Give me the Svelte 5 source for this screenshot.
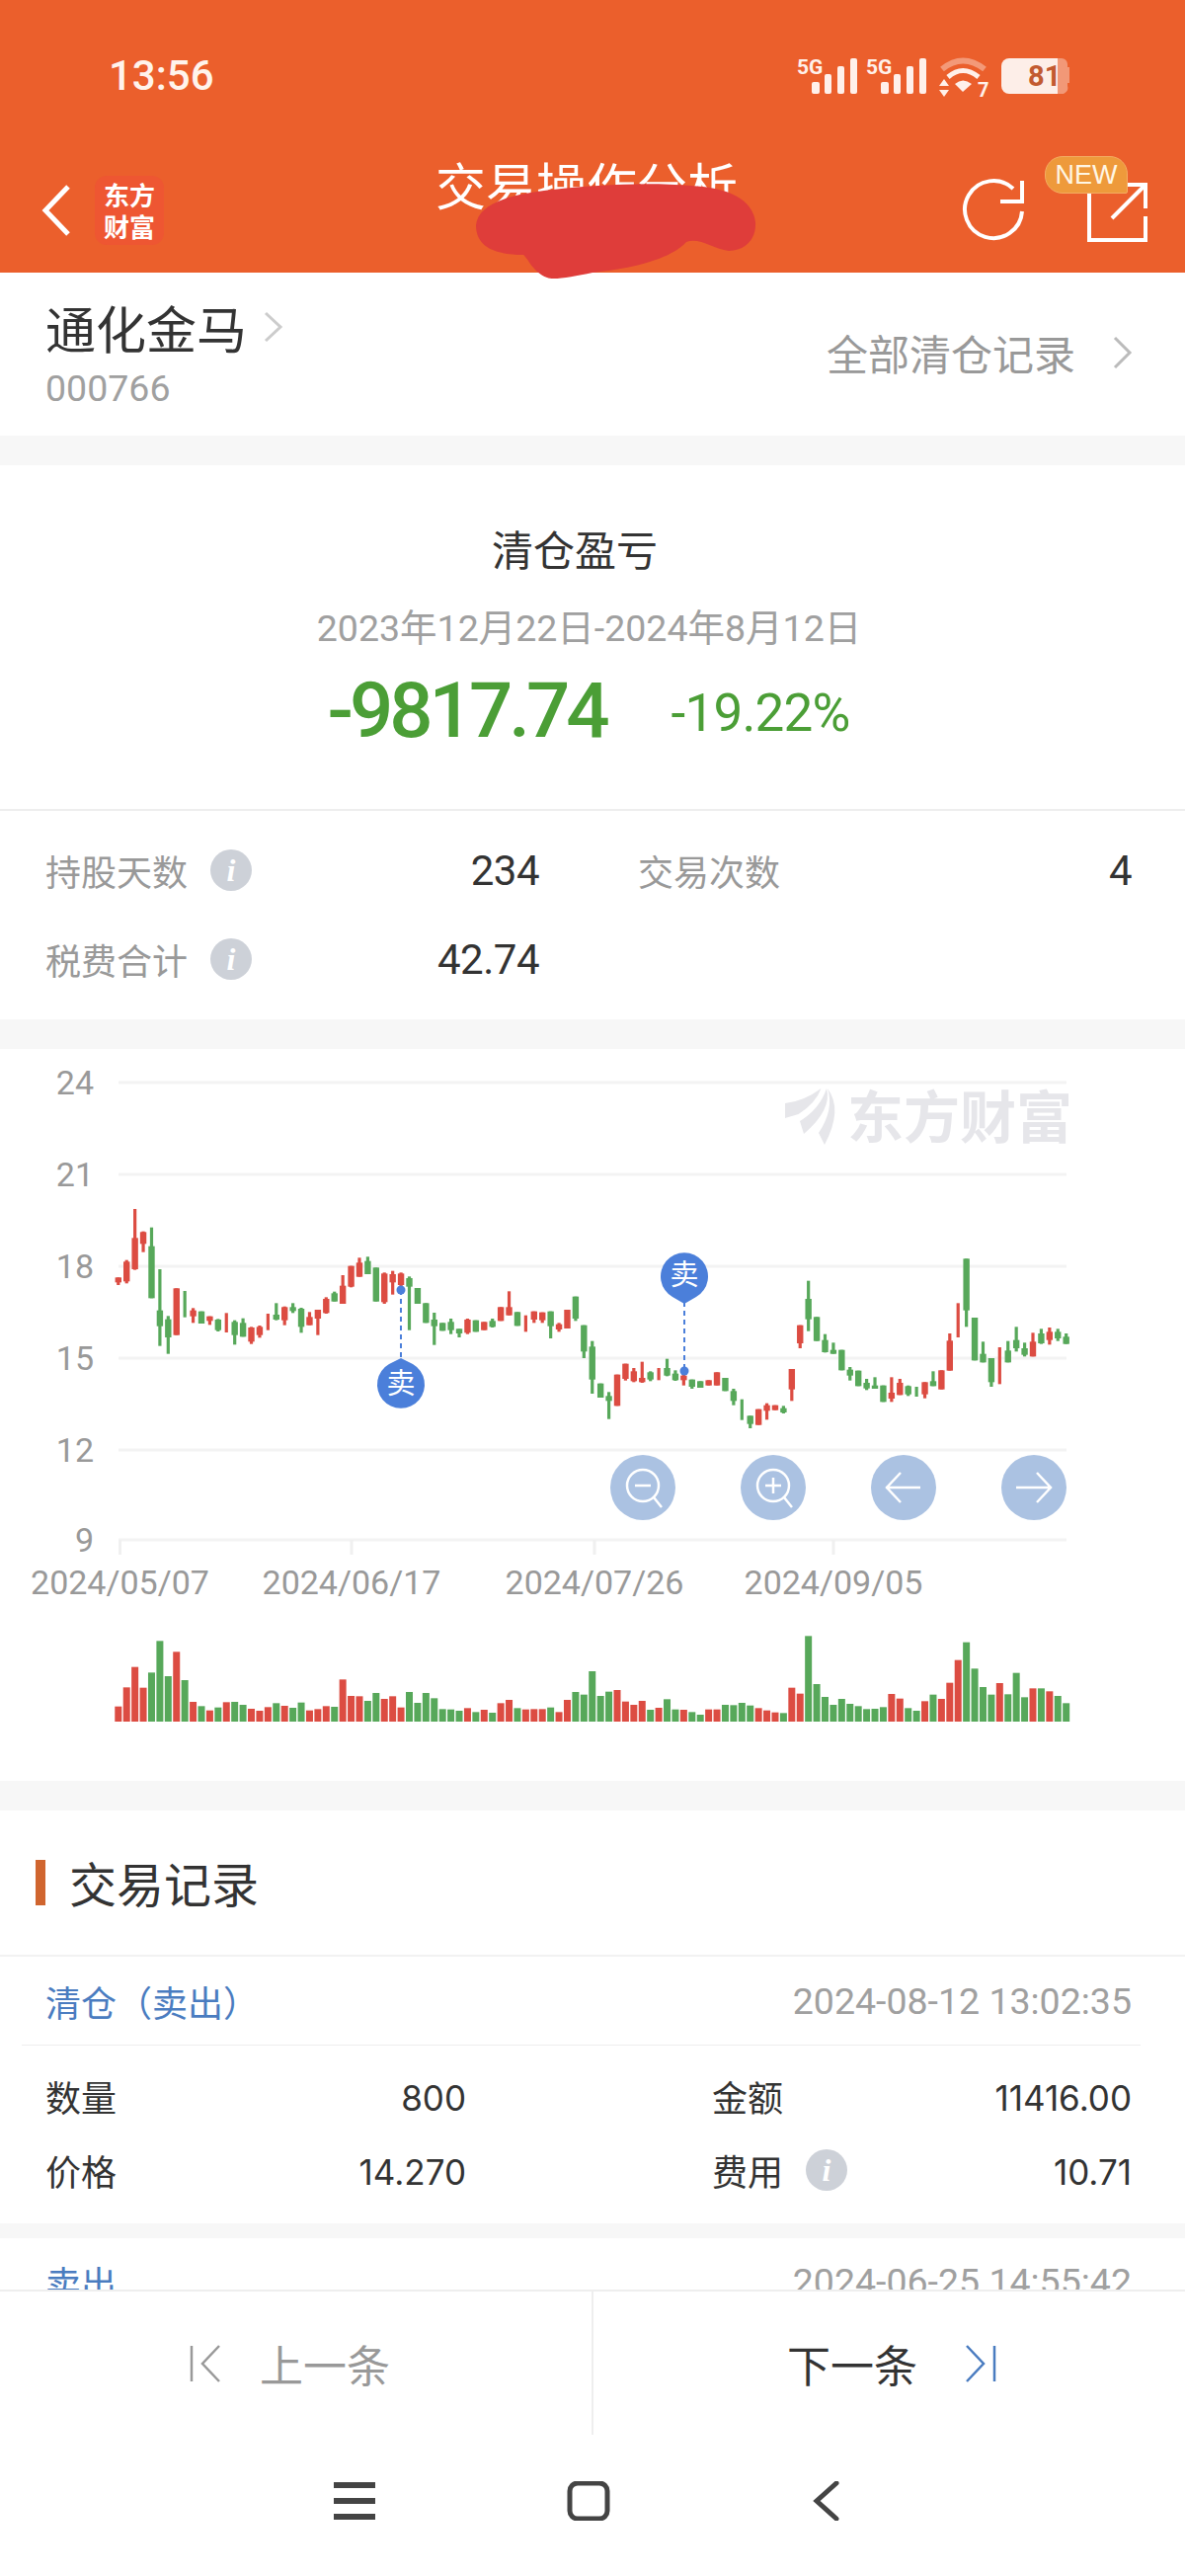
<script>
  // candles: [colour, wickTop, bodyTop, bodyBottom, wickBottom], read off at 3x and scaled in candleRects
  const part1 = [
    ['r',220,220,235,243],['r',167,172,232,238],['r',12,100,195,197],['r',80,82,118,143],['g',68,125,283,283],
    ['g',195,320,368,428],['g',337,347,402,452],['r',253,253,395,395],['g',261,0,0,341],['r',313,320,338,358],
    ['g',323,323,360,360],['r',338,338,352,364],['g',346,348,380,384],['r',328,0,0,387],['g',350,355,395,424],
    ['g',344,358,400,400],['r',370,372,415,422],['r',366,370,395,403],['r',330,0,0,380],['g',298,333,348,350],
    ['r',308,310,350,365],['g',298,310,322,328],['g',312,315,370,388],['r',325,340,365,365],['r',318,318,345,395],
    ['r',280,285,328,330],['g',263,268,293,293],['r',213,245,300,300],['r',185,185,248,250],['r',160,175,218,218],
    ['g',157,170,210,210],['g',190,190,293,293],['r',205,208,295,300],['r',200,210,235,272],['r',205,208,243,250],
    ['g',217,222,248,380],['g',252,252,300,300]
  ];
  const part2 = [
    ['g',118,118,178,178],['g',147,168,188,245],['g',178,178,202,202],['g',165,175,200,212],['g',196,196,210,222],
    ['r',165,168,208,212],['g',170,170,205,205],['r',175,175,200,200],['g',165,172,190,192],['r',130,130,172,172],
    ['r',82,130,155,155],['g',145,145,187,187],['r',155,0,0,205],['r',143,143,168,178],['r',146,146,170,178],
    ['g',143,143,188,225],['r',178,182,198,205],['r',138,138,195,195],['g',98,98,165,172],['g',185,185,265,285],
    ['g',233,250,350,393],['g',362,362,405,405],['g',388,400,415,470],['r',335,335,430,430],['r',302,302,348,353],
    ['r',315,325,355,358],['r',296,345,358,360],['g',325,328,350,355],['r',315,0,0,352],['g',287,315,338,340],
    ['g',322,332,352,354],['r',335,338,352,368],['g',350,350,372,378],['g',355,355,375,375],['r',352,352,368,368],
    ['r',328,328,368,368],['g',345,345,385,385],['g',378,385,415,428]
  ];
  const part3 = [
    ['g',470,0,0,533],['g',520,520,545,558],['r',500,500,548,548],['r',482,488,505,532],['r',488,488,503,503],
    ['g',490,497,510,513],['r',378,378,440,475],['r',245,245,300,315],['g',110,165,227,263],['g',220,220,293,293],
    ['g',272,290,327,328],['g',298,320,332,332],['g',320,320,382,382],['g',372,380,398,413],['g',383,383,430,430],
    ['g',408,420,437,442],['g',403,428,438,438],['g',428,428,478,478],['r',403,450,468,478],['r',408,420,457,457],
    ['g',428,430,455,460],['g',432,0,0,462],['r',418,418,455,467],['g',385,415,430,430],['r',382,382,440,440],
    ['r',270,292,383,383],['r',178,0,0,282],['g',43,43,200,250],['g',222,222,352,352],['g',295,332,358,358],
    ['g',345,345,418,432],['r',312,0,0,424],['g',293,322,358,358],['g',250,290,315,325],['g',298,315,335,340],
    ['r',268,295,340,340],['g',256,270,300,302],['r',252,265,290,304],['g',256,265,285,293],['g',270,280,302,302]
  ];

  const stepX = 8.42;
  const firstX = 119.8;

  function candleRects(list, baseY, startIndex) {
    return list.map((c, i) => ({
      x: firstX + stepX * (startIndex + i),
      fill: c[0] === 'r' ? '#dc4c42' : '#57a85a',
      wickTop: baseY + c[1] / 3,
      wickH: (c[4] - c[1]) / 3,
      bodyTop: baseY + c[2] / 3,
      bodyH: (c[3] - c[2]) / 3
    }));
  }

  const candles = [
    ...candleRects(part1, 1220, 0),
    ...candleRects(part2, 1280, 37),
    ...candleRects(part3, 1260, 75)
  ];

  const volumeBase = 1743;
  const volumeRaw = 'r1043 r985 r923 r986 g940 g844 g951 r877 g963 r1029 g1042 r1055 g1046 r1030 g1029 g1038 r1050 r1056 r1045 g1033 r1041 g1047 g1031 r1055 r1051 r1042 g1044 r961 r1011 r1012 g1026 g1002 r1020 r1012 r1046 g999 g1032 g1002 g1018 g1051 g1052 g1056 r1048 g1060 r1053 g1062 r1033 r1023 g1048 r1052 r1051 r1051 g1046 r1060 r1023 g999 g1007 g936 g1011 g998 r993 r1028 r1038 r1026 g1053 r1047 g1021 g1052 r1053 g1060 g1068 r1052 r1052 g1038 g1039 g1032 g1040 r1048 r1055 r1061 g1063 r986 r1004 g829 g975 g1014 g1038 g1020 g1035 g1042 g1051 g1050 g1045 r1005 r1019 g1048 g1056 r1027 g1007 r1020 r971 r902 g848 g928 g984 g1007 r972 g1006 g941 g1015 r988 g988 r997 g1011 g1033';
  const volumes = volumeRaw.split(' ').map((v, i) => {
    const top = 1380 + Number(v.slice(1)) / 3;
    return { x: firstX + stepX * i, top, fill: v[0] === 'r' ? '#dc4c42' : '#57a85a' };
  });

  const gridLines = [
    { label: '24', y: 1096 },
    { label: '21', y: 1189 },
    { label: '18', y: 1282 },
    { label: '15', y: 1375 },
    { label: '12', y: 1468 },
    { label: '9', y: 1559 }
  ];
  const ticks = [
    { x: 121.5, label: '2024/05/07' },
    { x: 356, label: '2024/06/17' },
    { x: 602, label: '2024/07/26' },
    { x: 844, label: '2024/09/05' }
  ];
</script>

<div class="page">
  <div class="blob">
    <svg viewBox="470 175 310 115" width="310" height="115">
      <path d="M482 228C484 205 520 196 560 192C600 188 650 184 700 188C735 190 762 200 765 225C766 242 755 254 738 254C722 252 708 240 695 245C680 262 640 272 600 276C580 280 560 284 554 281C540 276 535 262 530 258C505 258 482 252 482 228Z" fill="#df3d3a" />
    </svg>
  </div>

  <header class="top">
    <div class="status">
      <span class="time">13:56</span>
      <svg class="status-icons" viewBox="0 0 285 44" width="285" height="44">
        <text x="0" y="19" class="net">5G</text>
        <rect x="15" y="27" width="8" height="12" rx="2" fill="#fff0ea" />
        <rect x="28" y="19" width="7" height="20" rx="2" fill="#fff0ea" />
        <rect x="41" y="11" width="7" height="28" rx="2" fill="#fff0ea" />
        <rect x="54" y="3" width="7" height="36" rx="2" fill="#fff0ea" />
        <text x="70" y="19" class="net">5G</text>
        <rect x="85" y="27" width="8" height="12" rx="2" fill="#fff0ea" />
        <rect x="98" y="19" width="7" height="20" rx="2" fill="#fff0ea" />
        <rect x="111" y="11" width="7" height="28" rx="2" fill="#fff0ea" />
        <rect x="124" y="3" width="7" height="36" rx="2" fill="#fff0ea" />
        <path d="M147 14Q168 -3 190 14" fill="none" stroke="#fff0ea" stroke-opacity="0.4" stroke-width="6" />
        <path d="M153 22Q168 9 184 22" fill="none" stroke="#fff0ea" stroke-width="5" />
        <path d="M160 29Q168 22 177 29L168 37Z" fill="#fff0ea" />
        <path d="M149 24l5 7h-10zM149 42l5-7h-10z" fill="#fff0ea" />
        <text x="183" y="42" class="seven">7</text>
        <path d="M207 11a8 8 0 0 1 8-8h49v36h-49a8 8 0 0 1-8-8z" fill="#fdeee8" />
        <path d="M264 3h4a6 6 0 0 1 6 6v3h2v16h-2v3a6 6 0 0 1-6 8h-4z" fill="#fdeee8" fill-opacity="0.4" />
        <text x="234" y="31" class="battery">81</text>
      </svg>
    </div>
    <div class="bar">
      <svg class="back" viewBox="0 0 32 54" width="32" height="54">
        <path d="M28 3L5 27L28 51" fill="none" stroke="#fff" stroke-width="5" />
      </svg>
      <div class="brand">东方<br />财富</div>
      <div class="title">交易操作分析</div>
      <svg class="refresh" viewBox="0 0 66 66" width="66" height="66">
        <path d="M61 34A29 29 0 1 1 52 11" fill="none" stroke="#fff" stroke-width="4" />
        <path d="M39 24H61V3" fill="none" stroke="#fff" stroke-width="4" />
      </svg>
      <div class="share-wrap">
        <svg viewBox="0 0 64 64" width="64" height="64">
          <path d="M26 10H3V60H60V36" fill="none" stroke="#fff" stroke-width="4" />
          <path d="M36 4H60V28M60 4L26 38" fill="none" stroke="#fff" stroke-width="4" />
        </svg>
        <span class="new">NEW</span>
      </div>
    </div>
  </header>

  <main class="scroll">
    <section class="stock">
      <div>
        <div class="name-row">
          <span class="name">通化金马</span>
          <svg viewBox="0 0 20 32" width="20" height="32"><path d="M2 2L17 16L2 30" fill="none" stroke="#ccc" stroke-width="3" /></svg>
        </div>
        <div class="code">000766</div>
      </div>
      <div class="all">
        <span>全部清仓记录</span>
        <svg viewBox="0 0 20 34" width="20" height="34"><path d="M2 2L17 17L2 32" fill="none" stroke="#bbb" stroke-width="3" /></svg>
      </div>
    </section>

    <section class="summary">
      <div class="sum-title">清仓盈亏</div>
      <div class="sum-date">2023年12月22日-2024年8月12日</div>
      <div class="sum-amount">
        <span class="big">-9817.74</span>
        <span class="pct">-19.22%</span>
      </div>
    </section>

    <section class="stats">
      <div class="stat">
        <span class="stat-label">持股天数<i class="info">i</i></span>
        <span class="stat-value">234</span>
      </div>
      <div class="stat">
        <span class="stat-label">交易次数</span>
        <span class="stat-value">4</span>
      </div>
      <div class="stat">
        <span class="stat-label">税费合计<i class="info">i</i></span>
        <span class="stat-value">42.74</span>
      </div>
    </section>

    <section class="chart">
      <svg viewBox="0 1062 1200 741" width="1200" height="741">
        {#each gridLines as line}
          <rect x="120" y={line.y - 1.5} width="960" height="3" fill="#f3f3f3" />
          <text x="95" y={line.y + 12} text-anchor="end" class="axis">{line.label}</text>
        {/each}
        {#each ticks as tick}
          <rect x={tick.x - 1.5} y="1559" width="3" height="15" fill="#f0f0f0" />
          <text x={tick.x} y="1614" text-anchor="middle" class="axis">{tick.label}</text>
        {/each}

        <path d="M795 1117Q814 1115 831.5 1102Q826 1117 808.6 1128L795 1132Z" fill="#e6e6ea" />
        <path d="M810 1135Q830 1123 837 1102Q843 1123 814 1148Z" fill="#e6e6ea" />
        <path d="M829 1147Q845 1123 838 1102Q854 1123 835 1159Z" fill="#e6e6ea" />
        <text x="858" y="1152" class="mark">东方财富</text>

        {#each candles as c}
          <rect x={c.x - 1.6} y={c.wickTop} width="3.2" height={c.wickH} fill={c.fill} />
          {#if c.bodyH > 0}
            <rect x={c.x - 3.2} y={c.bodyTop} width="6.4" height={c.bodyH} fill={c.fill} />
          {/if}
        {/each}

        <line x1="406" y1="1306" x2="406" y2="1376" stroke="#4b7fda" stroke-width="2" stroke-dasharray="5 4" />
        <circle cx="406" cy="1306" r="4.5" fill="#4b7fda" />
        <path d="M406 1375L418 1381A24 24 0 1 1 394 1381Z" fill="#4b7fda" />
        <text x="406" y="1411" text-anchor="middle" class="pin">卖</text>

        <line x1="693" y1="1318" x2="693" y2="1388" stroke="#4b7fda" stroke-width="2" stroke-dasharray="5 4" />
        <circle cx="693" cy="1388" r="4.5" fill="#4b7fda" />
        <path d="M693 1320L705 1313A24 24 0 1 0 681 1313Z" fill="#4b7fda" />
        <text x="693" y="1301" text-anchor="middle" class="pin">卖</text>

        <circle cx="651" cy="1506" r="33" fill="#abc2e2" />
        <circle cx="651" cy="1504" r="16" fill="none" stroke="#fff" stroke-width="2.5" />
        <path d="M643 1504H659M662 1516L670 1526" fill="none" stroke="#fff" stroke-width="2.5" />
        <circle cx="783" cy="1506" r="33" fill="#abc2e2" />
        <circle cx="783" cy="1504" r="16" fill="none" stroke="#fff" stroke-width="2.5" />
        <path d="M775 1504H791M783 1496V1512M794 1516L802 1526" fill="none" stroke="#fff" stroke-width="2.5" />
        <circle cx="915" cy="1506" r="33" fill="#abc2e2" />
        <path d="M897 1506H932M912 1491L898 1506L912 1521" fill="none" stroke="#fff" stroke-width="2.5" />
        <circle cx="1047" cy="1506" r="33" fill="#abc2e2" />
        <path d="M1029 1506H1064M1050 1491L1064 1506L1050 1521" fill="none" stroke="#fff" stroke-width="2.5" />

        {#each volumes as v}
          <rect x={v.x - 3.5} y={v.top} width="7" height={volumeBase - v.top} fill={v.fill} />
        {/each}
      </svg>
    </section>

    <section class="records">
      <div class="rec-head">
        <span class="rec-flag"></span>
        <span class="rec-title">交易记录</span>
      </div>
      <div class="rec-line">
        <span class="rec-type">清仓（卖出）</span>
        <span class="rec-time">2024-08-12 13:02:35</span>
      </div>
      <div class="rec-grid">
        <div class="rec-cell"><span>数量</span><span class="num">800</span></div>
        <div class="rec-cell"><span>金额</span><span class="num">11416.00</span></div>
        <div class="rec-cell"><span>价格</span><span class="num">14.270</span></div>
        <div class="rec-cell"><span>费用<i class="info">i</i></span><span class="num">10.71</span></div>
      </div>
    </section>

    <section class="records next">
      <div class="rec-line">
        <span class="rec-type">卖出</span>
        <span class="rec-time">2024-06-25 14:55:42</span>
      </div>
    </section>
  </main>

  <footer class="foot">
    <div class="pager">
      <div class="page-btn prev">
        <svg viewBox="0 0 34 38" width="34" height="38">
          <path d="M2 1V37M30 1L13 19L30 37" fill="none" stroke="#999" stroke-width="2.5" />
        </svg>
        <span>上一条</span>
      </div>
      <div class="page-btn nxt">
        <span>下一条</span>
        <svg viewBox="0 0 34 38" width="34" height="38">
          <path d="M32 1V37M4 1L21 19L4 37" fill="none" stroke="#4a7cc0" stroke-width="2.5" />
        </svg>
      </div>
    </div>
    <div class="nav">
      <svg viewBox="0 0 60 40" width="60" height="40">
        <path d="M9 4H51M9 20H51M9 36H51" fill="none" stroke="#444" stroke-width="6" />
      </svg>
      <svg viewBox="0 0 60 40" width="60" height="40">
        <rect x="10" y="2" width="38" height="36" rx="8" fill="none" stroke="#444" stroke-width="5" />
      </svg>
      <svg viewBox="0 0 60 40" width="60" height="40">
        <path d="M42 2L22 20L42 38" fill="none" stroke="#444" stroke-width="5" stroke-linecap="round" />
      </svg>
    </div>
  </footer>
</div>

<style>
  :global(body) {
    margin: 0;
    background: #fff;
  }

  .page {
    position: relative;
    width: 1200px;
    height: 2608px;
    display: flex;
    flex-direction: column;
    overflow: hidden;
    font-family: Roboto, "Noto Sans CJK SC", sans-serif;
    color: #333;
  }

  .blob {
    position: absolute;
    left: 470px;
    top: 175px;
    z-index: 5;
    line-height: 0;
  }

  .top {
    height: 276px;
    flex: none;
    background: #eb5f2c;
    color: #fff;
  }

  .status {
    height: 150px;
    box-sizing: border-box;
    padding: 49px 0 0 110px;
    display: flex;
    justify-content: space-between;
  }

  .time {
    font-size: 42px;
    font-weight: 500;
    line-height: 56px;
    color: #fff3ec;
  }

  .status-icons {
    margin-right: 108px;
    margin-top: 7px;
  }

  .net {
    font: 700 21px Roboto, sans-serif;
    fill: #fff0ea;
  }

  .seven {
    font: 700 20px Roboto, sans-serif;
    fill: #fff0ea;
  }

  .battery {
    font: 700 29px Roboto, sans-serif;
    fill: #c25a30;
  }

  .bar {
    height: 126px;
    position: relative;
    display: flex;
    align-items: center;
    padding: 0 36px 0 41px;
  }

  .brand {
    margin-left: 23px;
    width: 70px;
    height: 70px;
    border-radius: 12px;
    background: #ee5632;
    font: 700 26px/32px "Noto Sans CJK SC", sans-serif;
    text-align: center;
    box-sizing: border-box;
    padding-top: 3px;
  }

  .title {
    position: absolute;
    left: 441px;
    top: 1px;
    font: 400 51px/70px "Noto Sans CJK SC", sans-serif;
    white-space: nowrap;
  }

  .refresh {
    margin-left: auto;
    margin-right: 60px;
  }

  .share-wrap {
    position: relative;
    width: 64px;
    height: 64px;
    top: 2px;
  }

  .new {
    position: absolute;
    left: -42px;
    top: -25px;
    width: 84px;
    height: 38px;
    border-radius: 18px 18px 2px 18px;
    background: #ee9a3b;
    border: 1px solid #f4ac62;
    box-sizing: border-box;
    font: 400 27px/36px "Liberation Sans", sans-serif;
    color: #fff6e4;
    text-align: center;
  }

  .scroll {
    flex: 1;
    min-height: 0;
    overflow: hidden;
    background: #f7f7f7;
  }

  section {
    background: #fff;
  }

  .stock {
    height: 165px;
    padding: 0 53px 0 46px;
    display: flex;
    justify-content: space-between;
    align-items: center;
  }

  .name-row {
    display: flex;
    align-items: center;
    gap: 17px;
    height: 60px;
    margin-top: -2px;
    margin-bottom: 2px;
  }

  .name {
    font: 400 51px/60px "Noto Sans CJK SC", sans-serif;
    color: #333;
  }

  .code {
    margin-top: 10px;
    font-size: 37.5px;
    line-height: 44px;
    color: #a0a0a0;
  }

  .all {
    display: flex;
    align-items: center;
    gap: 38px;
    margin-top: -3px;
    font: 400 42px/50px "Noto Sans CJK SC", sans-serif;
    color: #999;
  }

  .summary {
    margin-top: 30px;
    height: 350px;
    box-sizing: border-box;
    padding-top: 54px;
    text-align: center;
    border-bottom: 2px solid #eee;
  }

  .sum-title {
    font: 400 42px/60px "Noto Sans CJK SC", sans-serif;
    color: #333;
    padding-right: 36px;
  }

  .sum-date {
    margin-top: 26px;
    padding-right: 7px;
    font-size: 37.5px;
    line-height: 50px;
    color: #a0a0a0;
    font-family: Roboto, "Noto Sans CJK SC", sans-serif;
  }

  .sum-amount {
    margin-top: 14px;
    height: 90px;
    display: flex;
    justify-content: center;
    align-items: center;
    gap: 66px;
    padding-right: 8px;
    color: #4b9e36;
  }

  .big {
    font-size: 78px;
    letter-spacing: -4px;
    font-weight: 500;
    line-height: 90px;
  }

  .pct {
    font-size: 53px;
    letter-spacing: -0.8px;
    line-height: 64px;
    margin-top: 4px;
  }

  .stats {
    height: 211px;
    box-sizing: border-box;
    padding: 15px 54px 0 46px;
    display: grid;
    grid-template-columns: 500px 500px;
    grid-auto-rows: 90px;
    column-gap: 100px;
  }

  .stat {
    display: flex;
    justify-content: space-between;
    align-items: center;
  }

  .stat-label {
    display: flex;
    align-items: center;
    font: 400 36px/50px "Noto Sans CJK SC", sans-serif;
    color: #999;
  }

  .stat-value {
    font-size: 42px;
    letter-spacing: -0.5px;
  }

  .info {
    display: inline-block;
    width: 42px;
    height: 42px;
    margin-left: 23px;
    border-radius: 50%;
    background: #cdd1d8;
    color: #fff;
    font: italic 700 32px/42px "Liberation Serif", serif;
    text-align: center;
  }

  .chart {
    margin-top: 30px;
    height: 741px;
    line-height: 0;
  }

  .axis {
    font: 400 34px Roboto, sans-serif;
    fill: #999;
  }

  .mark {
    font: 700 57px "Noto Sans CJK SC", sans-serif;
    fill: #e6e6ea;
  }

  .pin {
    font: 400 29px "Noto Sans CJK SC", sans-serif;
    fill: #fff;
  }

  .records {
    margin-top: 30px;
    padding-bottom: 15px;
  }

  .rec-head {
    height: 148px;
    box-sizing: border-box;
    display: flex;
    align-items: center;
    gap: 24px;
    padding-left: 36px;
    border-bottom: 2px solid #f2f2f2;
  }

  .rec-flag {
    width: 10px;
    height: 46px;
    background: #d0652f;
  }

  .rec-title {
    font: 400 48px/60px "Noto Sans CJK SC", sans-serif;
    color: #333;
    margin-top: -3px;
  }

  .rec-line {
    margin: 0 45px 0 22px;
    padding: 0 9px 0 24px;
    height: 89px;
    display: flex;
    justify-content: space-between;
    align-items: center;
    border-bottom: 1px solid #eee;
  }

  .rec-type {
    font: 400 36px/50px "Noto Sans CJK SC", sans-serif;
    color: #4a7cc0;
    white-space: nowrap;
  }

  .rec-time {
    font-size: 37.5px;
    color: #a0a0a0;
  }

  .rec-grid {
    padding: 15px 54px 0 46px;
    display: grid;
    grid-template-columns: 426px 425px;
    grid-auto-rows: 75px;
    column-gap: 249px;
  }

  .rec-cell {
    display: flex;
    justify-content: space-between;
    align-items: center;
    font: 400 36px/50px "Noto Sans CJK SC", sans-serif;
    color: #333;
  }

  .rec-cell > span:first-child {
    display: flex;
    align-items: center;
    margin-top: -3px;
  }

  .num {
    font-family: Inter, sans-serif;
    font-size: 35px;
  }

  .records.next {
    margin-top: 15px;
    padding-bottom: 0;
  }

  .next .rec-line {
    border: 0;
    height: 88px;
  }

  .foot {
    flex: none;
    height: 290px;
    background: #fff;
    border-top: 2px solid #eee;
    box-sizing: border-box;
  }

  .pager {
    height: 145px;
    display: grid;
    grid-template-columns: 601px 1fr;
  }

  .page-btn {
    display: flex;
    align-items: center;
    font: 400 44px/60px "Noto Sans CJK SC", sans-serif;
  }

  .prev {
    color: #999;
    border-right: 2px solid #eee;
    padding: 0 0 0 192px;
    gap: 37px;
  }

  .nxt {
    color: #333;
    padding: 0 0 0 196px;
    gap: 46px;
  }

  .nav {
    padding: 47px 7px 0 0;
    display: flex;
    justify-content: center;
    gap: 178px;
  }
</style>
